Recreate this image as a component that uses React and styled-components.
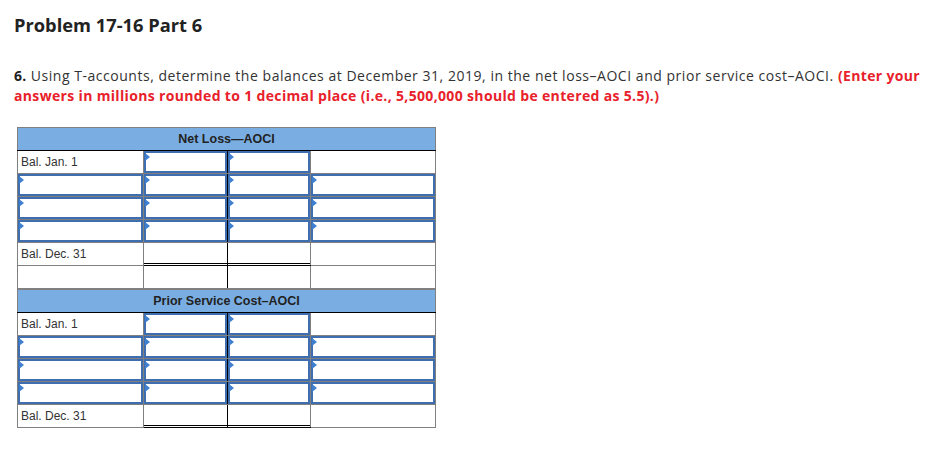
import React from 'react';
import styled, { createGlobalStyle } from 'styled-components';

const GlobalStyle = createGlobalStyle`
  body {
    margin: 0;
    background: #fff;
    font-family: "Open Sans", "Lato", sans-serif;
    color: #333;
  }
`;

const Page = styled.div`
  padding: 13px 0 0 14px;
`;

const Title = styled.h1`
  margin: 0;
  font-size: 18.3px;
  font-weight: 700;
  color: #222;
  line-height: 24px;
`;

const Question = styled.p`
  margin: 29px 0 0;
  font-size: 14px;
  line-height: 20px;
  color: #333;
  white-space: nowrap;
  letter-spacing: 0.53px;

  b {
    color: #222;
    letter-spacing: 0.3px;
  }

  .hint {
    color: #e8212b;
    font-weight: 700;
    letter-spacing: 0.34px;
  }
`;

const Tables = styled.div`
  margin: 21px 0 0 3px;
  width: 418px;
`;

const Table = styled.table`
  width: 418px;
  table-layout: fixed;
  border-collapse: collapse;
  font-family: "Liberation Sans", Arial, sans-serif;
  font-size: 12px;
  color: #333;
`;

const Head = styled.th`
  height: 22px;
  padding: 0;
  background: #7aaee3;
  border: 1px solid #808080;
  border-bottom: 1px solid #000;
  font-weight: 700;
  font-size: 12.5px;
  text-align: center;
  color: #222;
`;

const Cell = styled.td`
  height: 22px;
  padding: 0 3px;
  border: 1px solid #808080;
  ${(p) => p.$topBlack && 'border-top: 1px solid #000;'}
  ${(p) => p.$tLine && 'border-right: 1px solid #000;'}
  ${(p) =>
    p.$double &&
    'border-bottom: 1px solid #000; box-shadow: inset 0 -1px 0 #fff, inset 0 -2px 0 #000;'}
  vertical-align: middle;
`;

const InputCell = styled.td`
  height: 22px;
  padding: 0;
  border: 1px solid #808080;
  ${(p) => p.$tLine && 'border-right: 1px solid #000;'}
`;

const InputBox = styled.div`
  position: relative;
  height: 18px;
  border: 2px solid #3e6db0;

  &::before {
    content: '';
    position: absolute;
    left: -1px;
    top: 0;
    border-left: 5px solid #3f7fd0;
    border-top: 4px solid transparent;
    border-bottom: 4px solid transparent;
  }
`;

function Input({ tLine }) {
  return (
    <InputCell $tLine={tLine}>
      <InputBox />
    </InputCell>
  );
}

function TAccount({ title, trailingRow }) {
  return (
    <Table>
      <colgroup>
        <col style={{ width: 126 }} />
        <col style={{ width: 84 }} />
        <col style={{ width: 83 }} />
        <col style={{ width: 125 }} />
      </colgroup>
      <thead>
        <tr>
          <Head colSpan={4}>{title}</Head>
        </tr>
      </thead>
      <tbody>
        <tr>
          <Cell>Bal. Jan. 1</Cell>
          <Input tLine />
          <Input />
          <Cell />
        </tr>
        {[0, 1, 2].map((i) => (
          <tr key={i}>
            <Input />
            <Input tLine />
            <Input />
            <Input />
          </tr>
        ))}
        <tr>
          <Cell $topBlack>Bal. Dec. 31</Cell>
          <Cell $topBlack $tLine $double />
          <Cell $topBlack $double />
          <Cell $topBlack />
        </tr>
        {trailingRow && (
          <tr>
            <Cell />
            <Cell $tLine />
            <Cell />
            <Cell />
          </tr>
        )}
      </tbody>
    </Table>
  );
}

export default function App() {
  return (
    <Page>
      <GlobalStyle />
      <Title>Problem 17-16 Part 6</Title>
      <Question>
        <b>6.</b> Using T-accounts, determine the balances at December 31, 2019, in the net
        loss–AOCI and prior service cost–AOCI. <span className="hint">(Enter your</span>
        <br />
        <span className="hint">
          answers in millions rounded to 1 decimal place (i.e., 5,500,000 should be entered as
          5.5).)
        </span>
      </Question>
      <Tables>
        <TAccount title="Net Loss—AOCI" trailingRow />
        <TAccount title="Prior Service Cost–AOCI" />
      </Tables>
    </Page>
  );
}
